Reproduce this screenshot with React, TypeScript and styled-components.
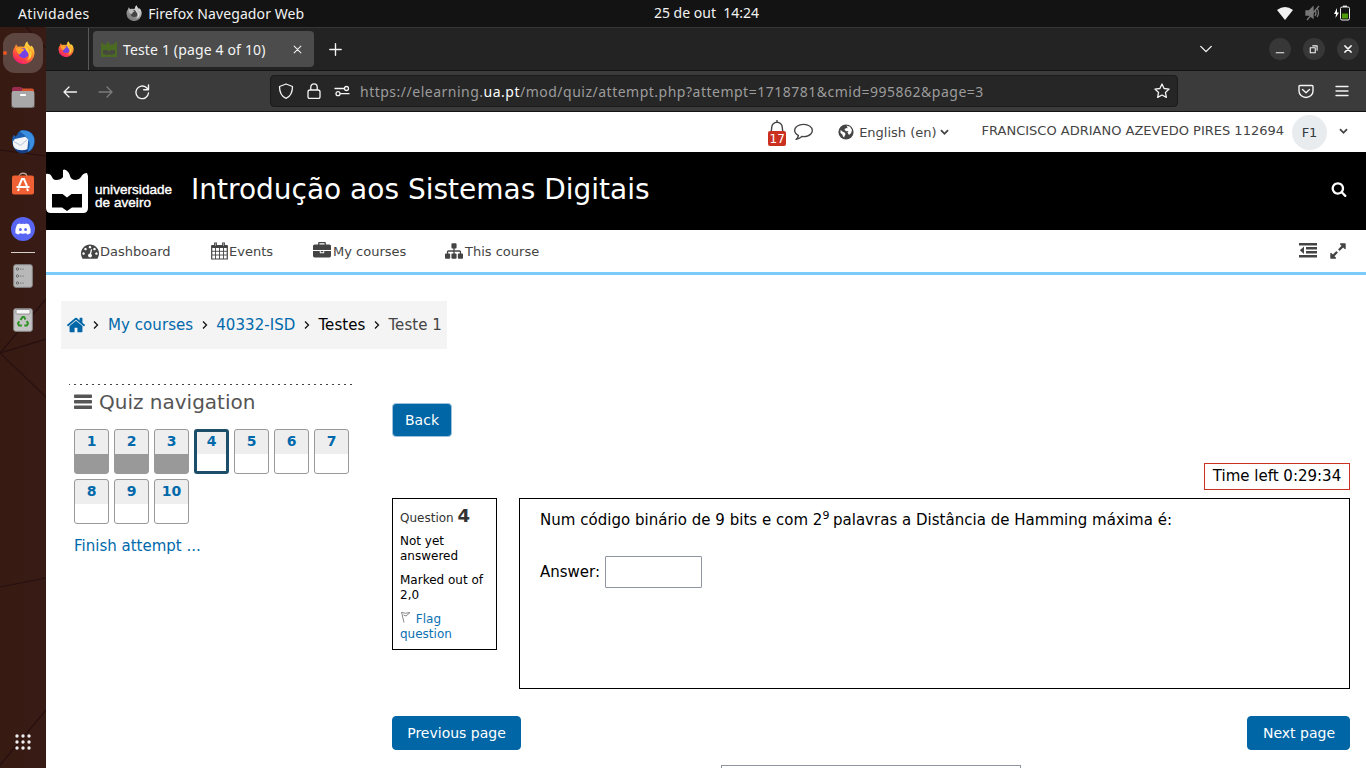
import React from 'react';
import styled, { createGlobalStyle } from 'styled-components';

const GlobalStyle = createGlobalStyle`
  * { box-sizing: border-box; }
  body { margin: 0; background: #fff; overflow: hidden; }
  a { text-decoration: none; }
`;

const BLUE = '#0066a6';
const LINK = '#0069ab';
const UI_FONT = '"Noto Sans", "Open Sans", sans-serif';
const PAGE_FONT = '"DejaVu Sans", sans-serif';

/* ---------- Desktop shell ---------- */
const Desktop = styled.div`
  width: 1366px;
  height: 768px;
  display: flex;
  flex-direction: column;
  overflow: hidden;
  font-family: ${PAGE_FONT};
`;
const SystemBar = styled.header`
  height: 27px;
  flex: none;
  display: grid;
  grid-template-columns: 1fr auto 1fr;
  align-items: center;
  background: #131313;
  color: #f2f2f2;
  font: 14px/27px ${UI_FONT};
`;
const SystemLeft = styled.div`
  display: flex;
  align-items: center;
  padding-left: 18px;
`;
const SystemLabel = styled.span<{ $spacing?: string; $width?: number }>`
  letter-spacing: ${p => p.$spacing ?? '0'};
  white-space: pre;
  ${p => (p.$width ? `width: ${p.$width}px;` : '')}
`;
const Clock = styled.span`
  padding: 0 0 2px 47px;
  line-height: 25px;
  white-space: pre;
`;
const SystemRight = styled.div`
  display: flex;
  justify-content: flex-end;
  align-items: center;
  gap: 12px;
  padding: 0 16px 1px 0;
`;
const Workspace = styled.div`
  flex: 1;
  min-height: 0;
  display: flex;
`;

/* ---------- Dock ---------- */
const Dock = styled.nav`
  position: relative;
  width: 46px;
  flex: none;
  display: flex;
  flex-direction: column;
  align-items: center;
  padding-top: 6px;
  background: linear-gradient(90deg, #371b12, #381b15);
`;
const Wallpaper = styled.svg`
  position: absolute;
  inset: 0;
`;
const DockItem = styled.div<{ $h: number; $active?: boolean }>`
  position: relative;
  width: 40px;
  height: ${p => p.$h}px;
  flex: none;
  display: flex;
  align-items: center;
  justify-content: center;
  padding-bottom: ${p => (p.$active ? 2 : 0)}px;
  border-radius: 12px;
  background: ${p => (p.$active ? '#5e4640' : 'transparent')};
`;
const RunningDot = styled.i`
  position: absolute;
  left: 3px;
  top: 24px;
  width: 4px;
  height: 4px;
  border-radius: 2px;
  background: #e95420;
`;
const DockRule = styled.div`
  position: relative;
  width: 24px;
  height: 1px;
  margin: 1px 0 1px;
  background: #d6cfcd;
  flex: none;
`;
const DockSpacer = styled.div`
  flex: 1;
`;

/* ---------- Browser chrome ---------- */
const Browser = styled.div`
  flex: 1;
  min-width: 0;
  display: flex;
  flex-direction: column;
`;
const TabStrip = styled.div`
  height: 44px;
  flex: none;
  display: flex;
  align-items: center;
  background: #232323;
  border-top: 1px solid #363636;
  border-bottom: 1px solid #141414;
  color: #f4f4f4;
  font: 14px/20px ${UI_FONT};
`;
const PinnedTab = styled.div`
  width: 43px;
  height: 42px;
  display: flex;
  align-items: center;
  padding-left: 12px;
  border-right: 1px solid #595959;
`;
const ActiveTab = styled.div`
  width: 221px;
  height: 36px;
  margin-left: 4px;
  padding: 0 12px 0 8px;
  display: flex;
  align-items: center;
  gap: 6px;
  border-radius: 4px;
  background: #4c4c4c;
`;
const TabTitle = styled.span`
  flex: 1;
  padding-top: 2px;
  white-space: nowrap;
  letter-spacing: 0.15px;
`;
const NewTab = styled.div`
  margin-left: 15px;
  display: flex;
  flex: 1;
`;
const WindowControls = styled.div`
  display: flex;
  align-items: center;
  gap: 12px;
  padding-right: 7px;
`;
const RoundControl = styled.div`
  width: 22px;
  height: 22px;
  border-radius: 50%;
  background: #373737;
  display: flex;
  align-items: center;
  justify-content: center;
`;
const TabListButton = styled.div`
  display: flex;
  margin-right: 56px;
`;
const NavBar = styled.div`
  height: 41px;
  flex: none;
  display: flex;
  align-items: center;
  background: #3b3b3b;
  border-bottom: 1px solid #141414;
`;
const NavButtons = styled.div`
  width: 224px;
  display: flex;
  gap: 20px;
  padding: 1px 0 0 16px;
`;
const AddressBar = styled.div`
  width: 908px;
  height: 32px;
  padding: 0 7px 0 7px;
  display: flex;
  align-items: center;
  border: 1px solid #1b1b1b;
  border-radius: 4px;
  background: #262626;
`;
const SiteIcons = styled.div`
  display: flex;
  gap: 12px;
  width: 82px;
`;
const Url = styled.span`
  flex: 1;
  padding-top: 1px;
  color: #9c9c9c;
  font: 14px/20px ${UI_FONT};
  letter-spacing: 0.5px;
  white-space: nowrap;
  b { color: #fbfbfb; font-weight: 400; }
`;
const ToolbarRight = styled.div`
  flex: 1;
  display: flex;
  justify-content: flex-end;
  gap: 20px;
  padding-right: 16px;
`;

/* ---------- Moodle page ---------- */
const Page = styled.main`
  flex: 1;
  min-height: 0;
  overflow: hidden;
  background: #fff;
`;
const UserBar = styled.div`
  height: 40px;
  display: flex;
  align-items: center;
  justify-content: flex-end;
  padding-right: 18px;
  color: #444;
  font-size: 13px;
`;
const BellWrap = styled.div`
  position: relative;
  width: 18px;
  height: 24px;
  margin-right: 8px;
`;
const Count = styled.span`
  position: absolute;
  left: 0;
  top: 11px;
  width: 18px;
  height: 15px;
  border-radius: 2px;
  background: #ca3120;
  color: #fff;
  font-size: 12px;
  line-height: 17px;
  text-align: center;
`;
const Raised = styled.span<{ $by: number }>`
  display: flex;
  padding-bottom: ${p => p.$by}px;
`;
const Language = styled.div`
  display: flex;
  align-items: center;
  margin: 0 33px 0 25px;
  white-space: nowrap;
`;
const LanguageName = styled.span`
  margin: 0 3px 0 5px;
`;
const UserName = styled.span`
  margin: 0 8px 3px 0;
  white-space: nowrap;
`;
const Avatar = styled.span`
  width: 35px;
  height: 35px;
  margin-right: 12px;
  border-radius: 50%;
  background: #e9ecef;
  color: #343a40;
  line-height: 36px;
  text-align: center;
`;
const Masthead = styled.div`
  height: 78px;
  display: flex;
  align-items: center;
  background: #000;
  color: #fff;
  padding-right: 19px;
`;
const BrandText = styled.div`
  width: 96px;
  margin: 9px 0 0 7px;
  font: 13.5px/13px "Liberation Sans", sans-serif;
  letter-spacing: 0.05px;
  -webkit-text-stroke: 0.4px #fff;
`;
const CourseTitle = styled.h1`
  flex: 1;
  margin: 0 0 3px;
  font-size: 28px;
  font-weight: 400;
  line-height: 36px;
`;
const MainMenu = styled.div`
  height: 45px;
  display: flex;
  align-items: center;
  padding: 0 19px 0 35px;
  border-bottom: 3px solid #7ccbfd;
  color: #444;
  font-size: 13px;
`;
const MenuItem = styled.div<{ $w: number; $gap: number }>`
  width: ${p => p.$w}px;
  display: flex;
  align-items: center;
  gap: ${p => p.$gap}px;
  white-space: nowrap;
`;
const MenuTools = styled.div`
  margin-left: auto;
  display: flex;
  align-items: center;
  gap: 12px;
`;
const Breadcrumb = styled.div`
  width: 386px;
  height: 48px;
  margin: 26px 0 0 15px;
  padding: 0 5px;
  display: flex;
  align-items: center;
  background: #f4f4f4;
  color: #000;
  font-size: 15px;
  letter-spacing: 0.07px;
  white-space: nowrap;
`;
const Crumb = styled.span<{ $tone: string }>`
  color: ${p => p.$tone};
`;
const HomeCrumb = styled.span`
  display: flex;
  width: 19px;
  color: ${BLUE};
  svg { flex: none; }
`;
const CrumbArrow = styled.span`
  width: 23px;
  display: flex;
  justify-content: center;
`;
const Columns = styled.div`
  display: flex;
  padding: 35px 16px 0 23px;
`;
const QuizNav = styled.aside`
  width: 284px;
  flex: none;
  margin-right: 39px;
  padding-left: 5px;
  background: repeating-linear-gradient(90deg, #444 0 1px, transparent 1px 5px, #444 5px 6px) 0 0 / 100% 1px no-repeat;
`;
const QuizNavTitle = styled.h2`
  display: flex;
  align-items: center;
  gap: 7px;
  margin: 0;
  padding-top: 5px;
  height: 31px;
  color: #555;
  font-size: 20px;
  font-weight: 400;
  line-height: 26px;
`;
const QuestionGrid = styled.div`
  display: flex;
  flex-wrap: wrap;
  gap: 5px;
  margin-top: 14px;
`;
const QuestionButton = styled.a<{ $answered?: boolean; $current?: boolean }>`
  width: 35px;
  height: 45px;
  border: ${p => (p.$current ? '3px solid #1c4e69' : '1px solid #999')};
  border-radius: 3px;
  background: linear-gradient(#eee 0 ${p => (p.$current ? 22 : 24)}px, ${p => (p.$answered ? '#999' : '#fff')} 0);
  color: ${LINK};
  font-size: 14px;
  font-weight: 700;
  line-height: ${p => (p.$current ? 19 : 23)}px;
  text-align: center;
`;
const FinishLink = styled.a`
  display: block;
  margin-top: 12px;
  color: ${LINK};
  font-size: 15px;
  line-height: 20px;
`;
const Attempt = styled.section`
  flex: 1;
  min-width: 0;
  padding-top: 19px;
  color: #000;
`;
const Button = styled.button<{ $w: number; $outlined?: boolean; $nudge?: number }>`
  width: ${p => p.$w}px;
  height: 34px;
  padding: 0 0 0 ${p => p.$nudge ?? 0}px;
  display: block;
  border: 1px solid ${p => (p.$outlined ? '#9fc2da' : BLUE)};
  border-radius: 4px;
  background: ${BLUE};
  color: #fff;
  font: 14px/30px ${PAGE_FONT};
`;
const Timer = styled.div`
  width: 146px;
  height: 27px;
  margin: 26px 0 8px auto;
  border: 1px solid #ca3120;
  font-size: 15px;
  line-height: 25px;
  text-align: center;
  white-space: nowrap;
`;
const QuestionRow = styled.div`
  display: flex;
  align-items: flex-start;
  gap: 22px;
`;
const Info = styled.div`
  width: 105px;
  height: 152px;
  padding: 6px 7px;
  border: 1px solid #000;
  font-size: 12px;
  line-height: 15px;
`;
const InfoTitle = styled.div`
  height: 29px;
  color: #333;
  line-height: 22px;
  white-space: nowrap;
  b { font-size: 18px; }
`;
const InfoText = styled.div`
  margin-bottom: 9px;
  & + & { margin-bottom: 8px; }
`;
const FlagLink = styled.a`
  color: #0a70b2;
`;
const QuestionBody = styled.div`
  flex: 1;
  height: 191px;
  padding: 11px 20px;
  border: 1px solid #000;
  font-size: 15px;
  line-height: 20px;
  sup { font-size: 11px; line-height: 0; vertical-align: 6px; }
`;
const Prompt = styled.div`
  letter-spacing: 0.02px;
`;
const AnswerRow = styled.label`
  display: flex;
  align-items: center;
  gap: 5px;
  margin-top: 26px;
`;
const AnswerInput = styled.input`
  width: 97px;
  height: 32px;
  border: 1px solid #8f959e;
  border-radius: 1px;
  background: #fff;
`;
const Pager = styled.div`
  display: flex;
  justify-content: space-between;
  margin-top: 27px;
`;
const JumpSelect = styled.div`
  width: 300px;
  height: 33px;
  margin: 15px 0 0 329px;
  border: 1px solid #8f959e;
`;

/* ---------- Icons ---------- */
const Fa = ({ d, size = 18 }: { d: string; size?: number }) => (
  <svg width={size} height={size} viewBox="0 0 1792 1792" fill="currentColor"><path d={d} /></svg>
);
const dot = '-53-37.5-90.5t-90.5-37.5-90.5 37.5-37.5 90.5 37.5 90.5 90.5 37.5 90.5-37.5 37.5-90.5z';
const paths = {
  search: 'M1216 832q0-185-131.500-316.500t-316.500-131.500-316.500 131.500-131.500 316.500 131.500 316.500 316.500 131.500 316.500-131.500 131.500-316.500zm512 832q0 52-38 90t-90 38q-54 0-90-38l-343-342q-179 124-399 124-143 0-273.500-55.500t-225-150-150-225-55.500-273.500 55.500-273.500 150-225 225-150 273.500-55.500 273.500 55.500 225 150 150 225 55.500 273.500q0 220-124 399l343 343q37 37 37 90z',
  home: 'M1472 992v480q0 26-19 45t-45 19h-384v-384h-256v384h-384q-26 0-45-19t-19-45v-480q0-1 .5-3t.5-3l575-474 575 474q1 2 1 6zm223-69l-62 74q-8 9-21 11h-3q-13 0-21-7l-692-577-692 577q-12 8-24 7-13-2-21-11l-62-74q-8-10-7-23.500t11-21.500l719-599q32-26 76-26t76 26l244 204v-195q0-14 9-23t23-9h192q14 0 23 9t9 23v408l219 182q10 8 11 21.500t-7 23.500z',
  gauge: `M384 1152q0${dot}m192-448q0${dot}m428 481l101-382q6-26-7.500-48.500t-38.500-29.500-48 6.500-30 39.500l-101 382q-60 5-107 43.500t-63 98.500q-20 77 20 146t117 89 146-20 89-117q16-60-6-117t-72-91zm660-33q0${dot}m-640-640q0${dot}m448 192q0${dot}m320 448q0 261-141 483-19 29-54 29h-1402q-35 0-54-29-141-221-141-483 0-182 71-348t191-286 286-191 348-71 348 71 286 191 191 286 71 348z`,
  briefcase: 'M640 256h512v-128h-512v128zm1152 640v480q0 66-47 113t-113 47h-1472q-66 0-113-47t-47-113v-480h672v160q0 26 19 45t45 19h320q26 0 45-19t19-45v-160h672zm-768 0v128h-256v-128h256zm768-480v384h-1792v-384q0-66 47-113t113-47h352v-160q0-40 28-68t68-28h576q40 0 68 28t28 68v160h352q66 0 113 47t47 113z',
  sitemap: 'M1792 1248v320q0 40-28 68t-68 28h-320q-40 0-68-28t-28-68v-320q0-40 28-68t68-28h96v-192h-512v192h96q40 0 68 28t28 68v320q0 40-28 68t-68 28h-320q-40 0-68-28t-28-68v-320q0-40 28-68t68-28h96v-192h-512v192h96q40 0 68 28t28 68v320q0 40-28 68t-68 28h-320q-40 0-68-28t-28-68v-320q0-40 28-68t68-28h96v-192q0-52 38-90t90-38h512v-192h-96q-40 0-68-28t-28-68v-320q0-40 28-68t68-28h320q40 0 68 28t28 68v320q0 40-28 68t-68 28h-96v192h512q52 0 90 38t38 90v192h96q40 0 68 28t28 68z',
  comment: 'M896 384q-204 0-381.500 69.500t-282 187.500-104.500 255q0 112 71.500 213.500t201.500 175.500l87 50-27 96q-24 91-70 172 152-63 275-171l43-38 57 6q69 8 130 8 204 0 381.500-69.500t282-187.500 104.500-255-104.500-255-282-187.500-381.500-69.500zm896 512q0 174-120 321.500t-326 233-450 85.500q-70 0-145-8-198 175-460 242-49 14-114 22h-5q-15 0-27-10.500t-16-27.500v-1q-3-4-.5-12t2-10 4.500-9.500l6-9 7-8.500 8-9q7-8 31-34.500t34.500-38 31-39.500 32.500-51 27-59 26-76q-157-89-247.500-220t-90.500-281q0-130 71-248.500t191-204.500 286-136.500 348-50.500 348 50.500 286 136.500 191 204.500 71 248.500z',
  expand: 'M883 1056q0 13-10 23l-332 332 144 144q19 19 19 45t-19 45-45 19h-448q-26 0-45-19t-19-45v-448q0-26 19-45t45-19 45 19l144 144 332-332q10-10 23-10t23 10l114 114q10 10 10 23zm781-864v448q0 26-19 45t-45 19-45-19l-144-144-332 332q-10 10-23 10t-23-10l-114-114q-10-10-10-23t10-23l332-332-144-144q-19-19-19-45t19-45 45-19h448q26 0 45 19t19 45z',
  chevron: 'M1683 808l-742 741q-19 19-45 19t-45-19l-742-741q-19-19-19-45.500t19-45.500l166-165q19-19 45-19t45 19l531 531 531-531q19-19 45-19t45 19l166 165q19 19 19 45.500t-19 45.500z',
};

const Firefox = ({ size, mono }: { size: number; mono?: boolean }) => {
  const id = `fx${size}${mono ? 'm' : ''}`;
  return (
    <svg width={size} height={size} viewBox="0 0 24 24">
      <defs>
        <linearGradient id={id} x1=".8" y1="0" x2=".25" y2="1">
          <stop offset="0" stopColor={mono ? '#eee' : '#fff44f'} />
          <stop offset=".35" stopColor={mono ? '#bbb' : '#ffa12a'} />
          <stop offset=".7" stopColor={mono ? '#888' : '#ff4a3f'} />
          <stop offset="1" stopColor={mono ? '#777' : '#f0147e'} />
        </linearGradient>
      </defs>
      <path d="M3 6.200 4.200 3.500 6 6 8.800 5.800 12.500 6 13.500 4.200C13.700 2.500 14.600 1.200 16 .5c.2 2.500 2 3.700 3.500 5.500l1-1.300C22.400 7.200 23.500 9.500 23.500 12.500A11.300 11.300 0 0 1 .8 13C.7 10.300 1.600 8 3 6.200Z" fill={`url(#${id})`} />
      <circle cx="12.200" cy="12.800" r="5.300" fill={mono ? '#444' : '#7542e5'} />
      <path d="M4 7.500c2-1.400 4-1 5.500 0 1.300 1 3 .7 3.400 1.500-.3 1.200-2.400 1.400-3 2.400.2 1.800-1.600 1.600-2.300 2.800-.9-1-3-3-3.600-6.700Z" fill={mono ? '#bdbdbd' : '#ffa52b'} />
      <path d="M14 5c1 2.500 4 3.500 4 7.500 1.200-.7 1.200-1.700 1-2.800 3 4 1 9.800-4 10.800 3-2 3.600-5.500 1.800-8C15.500 10.400 13 9 14 5Z" fill={mono ? '#ddd' : '#ffd13a'} />
    </svg>
  );
};

const Stroke = ({ d, size = 16, color = '#f4f4f4', w = 1.3 }: { d: string; size?: number; color?: string; w?: number }) => (
  <svg width={size} height={size} viewBox="0 0 16 16" fill="none" stroke={color} strokeWidth={w} strokeLinecap="round" strokeLinejoin="round"><path d={d} /></svg>
);

const FilesIcon = () => (
  <svg width="24" height="24" viewBox="0 0 24 24">
    <path d="M1 4a2 2 0 0 1 2-2h7l2 2h9a2 2 0 0 1 2 2v5H1z" fill="#9a2c50" />
    <path d="M11 3.500h10a2 2 0 0 1 2 2V8H11z" fill="#d4532d" />
    <rect x=".6" y="6" width="22.800" height="16" rx="2" fill="#a8a8a8" />
    <path d="M.6 21a2 2 0 0 0 2 1.500h19a2 2 0 0 0 2-1.500" fill="none" stroke="#777" />
    <rect x="9" y="9" width="6" height="2" rx=".8" fill="#fff" />
  </svg>
);
const ThunderbirdIcon = () => (
  <svg width="25" height="25" viewBox="0 0 26 26">
    <path d="M8 3C12 0 20 1 23 6c3 5 2 13-3 17-5 3-11 2-15-1C1 18 0 10 3 6l2 2z" fill="#1d5fae" />
    <path d="M9 2c7-2 14 2 15 8 1 7-3 12-7 14 3-5 3-9 1-13C16 7 12 5 9 2Z" fill="#3b8fe0" />
    <path d="M2 13 4 10.500 15 8l3 3-1 10c-5 2-10 1-13-1-2-2-2-4-2-7Z" fill="#f3f5f8" />
    <path d="m3 13 7 4 7-6" fill="none" stroke="#aebfd4" />
    <path d="M4 21c5 2 10 2 13 0l1 2c-4 4-10 3-14-2Z" fill="#173d83" />
  </svg>
);
const SoftwareIcon = () => (
  <svg width="24" height="24" viewBox="0 0 24 24">
    <path d="M8 5c0-5 8-5 8 0" fill="none" stroke="#b9a18c" strokeWidth="1.300" />
    <rect x="1" y="3.500" width="22" height="19" rx="2" fill="#ef6134" />
    <path d="M8 14 11 7h2l3 7M5.500 15h13M7 19l1-2.500M17 19l-1-2.500" fill="none" stroke="#fff" strokeWidth="2" />
  </svg>
);
const DiscordIcon = () => (
  <svg width="24" height="24" viewBox="0 0 24 24">
    <circle cx="12" cy="12" r="12" fill="#5865f2" />
    <path d="M8.500 6.500 10 7q2-.3 4 0l1.500-.5 2.500 1q2 4 1.600 8.500-1.600 1.300-3.400 1.600l-.9-1.400q-3.300.9-6.600 0l-.9 1.400q-1.800-.3-3.400-1.600Q4 11.500 6 7.500Z" fill="#fff" />
    <ellipse cx="9.400" cy="12.500" rx="1.400" ry="1.600" fill="#5865f2" /><ellipse cx="14.600" cy="12.500" rx="1.400" ry="1.600" fill="#5865f2" />
  </svg>
);
const DrivesIcon = () => (
  <svg width="20" height="24" viewBox="0 0 20 24">
    <rect x=".7" y=".7" width="18.600" height="22.600" rx="2" fill="#b8b8b8" stroke="#8b8b8b" />
    {[5, 12, 19].map(y => (
      <g key={y} fill="#555"><circle cx="4.500" cy={y} r="1.200" fill="none" stroke="#666" /><circle cx="7.700" cy={y} r=".6" /><circle cx="10" cy={y} r=".6" /></g>
    ))}
  </svg>
);
const TrashIcon = () => (
  <svg width="20" height="24" viewBox="0 0 20 24">
    <rect x=".7" y=".7" width="18.600" height="22.600" rx="2" fill="#c4c4c4" stroke="#8b8b8b" />
    <rect x="3" y="1.500" width="14" height="4.500" rx="1" fill="#f6f6f6" stroke="#666" strokeWidth=".6" />
    <g fill="none" stroke="#2f9226" strokeWidth="2"><path d="m7.500 12 2-3h1.500l1.500 2.500M13.800 13l1.200 2.500-1.200 2h-2.500M8.800 17.500H6l-1-2 1.200-2.300" /></g>
  </svg>
);
const CalendarIcon = () => (
  <svg width="17" height="18" viewBox="0 0 17 18" fill="none" stroke="currentColor">
    <path d="M.7 4h15.600v13H.7z" strokeWidth="1.200" /><path d="M.5 4.500h16" strokeWidth="3" />
    <path d="M4.500 6v11M8.500 6v11M12.500 6v11M1 9.300h15M1 13h15" strokeWidth=".9" />
    <path d="M4.500.5v4M12.500.5v4" strokeWidth="2.800" /><path d="M4.500 1.300v2.500M12.500 1.300v2.500" stroke="#bbb" strokeWidth=".8" />
  </svg>
);
const OutdentIcon = () => (
  <svg width="18" height="15" viewBox="0 0 18 15" fill="currentColor">
    <path d="M0 0h18v2.500H0zM7 4h11v2.500H7zM7 8h11v2.500H7zM0 12h18v2.500H0zM5 3.500v7.500L.8 7.200z" />
  </svg>
);
const GlobeIcon = () => (
  <svg width="16" height="16" viewBox="0 0 16 16">
    <circle cx="8" cy="8" r="7.600" fill="#444" />
    <path d="M8.500 1.500 12 2.800l2 3.200-.8 3-2.200 2-1.500-2.500 1-1.500-2.200.3-2-1.500L8 4l1.500.3-.3-1.600zM2.500 6l2 1.500 2.500 1.200.5 1.800L6.500 12l-.3 1.500L5 12.500 4.300 10.500 2.500 9z" fill="#fff" />
  </svg>
);

const UaLogo = () => (
  <svg width="42" height="45" viewBox="0 0 42 45">
    <path d="M0 5Q4 4 6 8q1 3 4 3 5 0 7-3V1L18.500.5Q23 2 24 7q1 4 6 4 3 0 5-3 2-4 6-4l1 3v32q0 5-5 5H5q-5 0-5-5z" fill="#fff" />
    <path d="M6 25h10.500l4.500 3.500 4.500-3.500H36v13.500H26L21 42l-5-3.500H6z" fill="#000" />
  </svg>
);
const Favicon = () => (
  <svg width="16" height="16" viewBox="0 0 16 16">
    <path d="M0 1l2 2 3 1 1-2 1-2 1 2 1 2 4-1 3-3v16H0z" fill="#4b6b22" />
    <path d="M2 9h4l2 1.500L10 9h4v4l-4 1-2-1-2 1-4-1z" fill="#47493f" />
  </svg>
);

const CrumbSep = () => (
  <CrumbArrow><svg width="6" height="10" viewBox="0 0 6 10" fill="none" stroke="#111" strokeWidth="1.300"><path d="m1 1.500 3.500 3.500L1 8.500" /></svg></CrumbArrow>
);

const questions = Array.from({ length: 10 }, (_, i) => i + 1);

export default function App() {
  return (
    <Desktop>
      <GlobalStyle />
      <SystemBar>
        <SystemLeft>
          <SystemLabel $width={108} $spacing="0.35px">Atividades</SystemLabel>
          <Raised $by={2}><Firefox size={16} mono /></Raised>
          <SystemLabel $spacing="0.1px">{' \u2009Firefox Navegador Web'}</SystemLabel>
        </SystemLeft>
        <Clock>25 de out  14:24</Clock>
        <SystemRight>
          <svg width="16" height="13" viewBox="0 0 16 13"><path d="M0 3Q8-3 16 3L8 13z" fill="#f2f2f2" /></svg>
          <svg width="16" height="16" viewBox="0 0 16 16" fill="none" stroke="#777" strokeWidth="1.300"><path d="M1 6h3l4-4v11L4 10H1z" fill="#777" /><path d="M10 5q2 3 0 6M12 3q3 5 0 9M2 15 14 1" /></svg>
          <svg width="17" height="16" viewBox="0 0 17 16"><path d="M4 3 1 9h2l-.5 4L6 7.500H4z" fill="#fff" /><rect x="7.500" y="2" width="9" height="13" rx="1.500" fill="none" stroke="#eee" /><path d="M10 .6h4V2h-4z" fill="#eee" /><path d="M9 8.500h6v5H9z" fill="#4e9a06" /></svg>
        </SystemRight>
      </SystemBar>
      <Workspace>
        <Dock>
          <Wallpaper width="46" height="741" viewBox="0 0 46 741" stroke="#271010" strokeWidth="1.200">
            <path d="M26 0l20 21M0 123l46 6M46 272 0 326l46-14M0 326l46 44M0 560l46-9M46 683 0 738" fill="none" />
          </Wallpaper>
          <DockItem $h={40} $active><Firefox size={23} /></DockItem>
          <RunningDot />
          <DockItem $h={48}><FilesIcon /></DockItem>
          <DockItem $h={40}><ThunderbirdIcon /></DockItem>
          <DockItem $h={46}><SoftwareIcon /></DockItem>
          <DockItem $h={44}><DiscordIcon /></DockItem>
          <DockRule />
          <DockItem $h={44}><DrivesIcon /></DockItem>
          <DockItem $h={44}><TrashIcon /></DockItem>
          <DockSpacer />
          <DockItem $h={52}>
            <svg width="16" height="16" viewBox="0 0 16 16" fill="#f0f0f0">
              {[2, 8, 14].map(y => [2, 8, 14].map(x => <circle key={`${x}-${y}`} cx={x} cy={y} r="1.700" />))}
            </svg>
          </DockItem>
        </Dock>
        <Browser>
          <TabStrip>
            <PinnedTab><Firefox size={16} /></PinnedTab>
            <ActiveTab>
              <Favicon />
              <TabTitle>Teste 1 (page 4 of 10)</TabTitle>
              <Stroke size={9} d="m2 2 12 12M14 2 2 14" w={1.800} />
            </ActiveTab>
            <NewTab><Stroke size={13} d="M8 1v14M1 8h14" w={1.700} /></NewTab>
            <TabListButton><Stroke size={14} d="m2 5 6 6 6-6" w={1.600} /></TabListButton>
            <WindowControls>
              <RoundControl><Stroke size={12} d="M3 13h10" w={1.500} /></RoundControl>
              <RoundControl><Stroke size={10} d="M2 6h8v8H2zM6 3h7v7" w={1.700} /></RoundControl>
              <RoundControl><Stroke size={10} d="m3 3 10 10M13 3 3 13" w={2.400} /></RoundControl>
            </WindowControls>
          </TabStrip>
          <NavBar>
            <NavButtons>
              <Stroke d="M14.500 8H2M7 3 2 8l5 5" />
              <Stroke d="M1 8h13M9 3l5 5-5 5" color="#7c7c7c" />
              <Stroke d="M14.500 9a6.300 6.300 0 1 1-2.200-5.500l2 2M14.500 1v4.800h-4.800" w={1.400} />
            </NavButtons>
            <AddressBar>
              <SiteIcons>
                <Stroke d="M8 1 14.500 3.500C14.500 9 12.500 13.500 8 15.300 3.500 13.500 1.500 9 1.500 3.500Z" />
                <Stroke d="M4 7h8a2 2 0 0 1 2 2v5a1.500 1.500 0 0 1-1.500 1.500h-9A1.500 1.500 0 0 1 2 14V9a2 2 0 0 1 2-2ZM4.800 7V4a3.200 3.200 0 0 1 6.400 0v3" />
                <Stroke d="M1 5.500h8.500M10.500 5.500a2 2 0 1 0 4 0 2 2 0 1 0-4 0M2 10.700a2 2 0 1 0 4 0 2 2 0 1 0-4 0M7 10.700h8" />
              </SiteIcons>
              <Url>https://elearning.<b>ua.pt</b>/mod/quiz/attempt.php?attempt=1718781&amp;cmid=995862&amp;page=3</Url>
              <Stroke d="m8 1 2.100 4.500 5 .6-3.700 3.300 1 5L8 12l-4.400 2.400 1-5L.9 6.100l5-.6z" />
            </AddressBar>
            <ToolbarRight>
              <Stroke d="M2 2.500h12q1 0 1 1V8A7 6.500 0 0 1 1 8V3.500q0-1 1-1ZM4.500 6.500 8 9.800l3.500-3.300" w={1.400} />
              <Stroke d="M2 3.500h12M2 8h12M2 12.500h12" />
            </ToolbarRight>
          </NavBar>
          <Page>
            <UserBar>
              <BellWrap>
                <svg width="18" height="18" viewBox="0 0 18 18" fill="none" stroke="#444" strokeWidth="1.400"><path d="M9 0v2M1 15.500Q3.500 13 3.700 7.500A5.300 5.300 0 0 1 14.300 7.500Q14.500 13 17 15.500Z" /></svg>
                <Count>17</Count>
              </BellWrap>
              <Raised $by={3}><Fa d={paths.comment} size={19} /></Raised>
              <Language><GlobeIcon /><LanguageName>English (en)</LanguageName><Raised $by={1}><Fa d={paths.chevron} size={9} /></Raised></Language>
              <UserName>FRANCISCO ADRIANO AZEVEDO PIRES 112694</UserName>
              <Avatar>F1</Avatar>
              <Raised $by={3}><Fa d={paths.chevron} size={9} /></Raised>
            </UserBar>
            <Masthead>
              <UaLogo />
              <BrandText>universidade<br />de aveiro</BrandText>
              <CourseTitle>Introdução aos Sistemas Digitais</CourseTitle>
              <Raised $by={5}><Fa d={paths.search} size={16} /></Raised>
            </Masthead>
            <MainMenu>
              <MenuItem $w={130} $gap={1}><Fa d={paths.gauge} />Dashboard</MenuItem>
              <MenuItem $w={102} $gap={1}><CalendarIcon />Events</MenuItem>
              <MenuItem $w={132} $gap={2}><Fa d={paths.briefcase} />My courses</MenuItem>
              <MenuItem $w={100} $gap={2}><Fa d={paths.sitemap} />This course</MenuItem>
              <MenuTools><Raised $by={2}><OutdentIcon /></Raised><Fa d={paths.expand} size={18} /></MenuTools>
            </MainMenu>
            <Breadcrumb>
              <HomeCrumb><Fa d={paths.home} size={20} /></HomeCrumb>
              <CrumbSep /><Crumb $tone={LINK}>My courses</Crumb>
              <CrumbSep /><Crumb $tone={LINK}>40332-ISD</Crumb>
              <CrumbSep /><Crumb $tone="#000">Testes</Crumb>
              <CrumbSep /><Crumb $tone="#444">Teste 1</Crumb>
            </Breadcrumb>
            <Columns>
              <QuizNav>
                <QuizNavTitle>
                  <svg width="18" height="16" viewBox="0 0 18 16" fill="currentColor"><rect y=".5" width="18" height="3.500" rx=".8" /><rect y="6" width="18" height="3.500" rx=".8" /><rect y="11.500" width="18" height="3.500" rx=".8" /></svg>
                  Quiz navigation
                </QuizNavTitle>
                <QuestionGrid>
                  {questions.map(n => <QuestionButton key={n} $answered={n < 4} $current={n === 4}>{n}</QuestionButton>)}
                </QuestionGrid>
                <FinishLink>Finish attempt ...</FinishLink>
              </QuizNav>
              <Attempt>
                <Button $w={60} $outlined>Back</Button>
                <Timer>Time left 0:29:34</Timer>
                <QuestionRow>
                  <Info>
                    <InfoTitle>Question <b>4</b></InfoTitle>
                    <InfoText>Not yet answered</InfoText>
                    <InfoText>Marked out of 2,0</InfoText>
                    <FlagLink>
                      <svg width="12" height="12" viewBox="0 0 12 12" fill="none" stroke="#888"><path d="M1.500 1 4 11.500M2 1.500Q5 3 10 1.500L6 5 3.500 4" /></svg>
                      {' '}Flag question
                    </FlagLink>
                  </Info>
                  <QuestionBody>
                    <Prompt>Num código binário de 9 bits e com 2<sup>9 </sup>palavras a Distância de Hamming máxima é:</Prompt>
                    <AnswerRow>Answer: <AnswerInput aria-label="Answer" /></AnswerRow>
                  </QuestionBody>
                </QuestionRow>
                <Pager><Button $w={129}>Previous page</Button><Button $w={103} $nudge={1}>Next page</Button></Pager>
                <JumpSelect />
              </Attempt>
            </Columns>
          </Page>
        </Browser>
      </Workspace>
    </Desktop>
  );
}
